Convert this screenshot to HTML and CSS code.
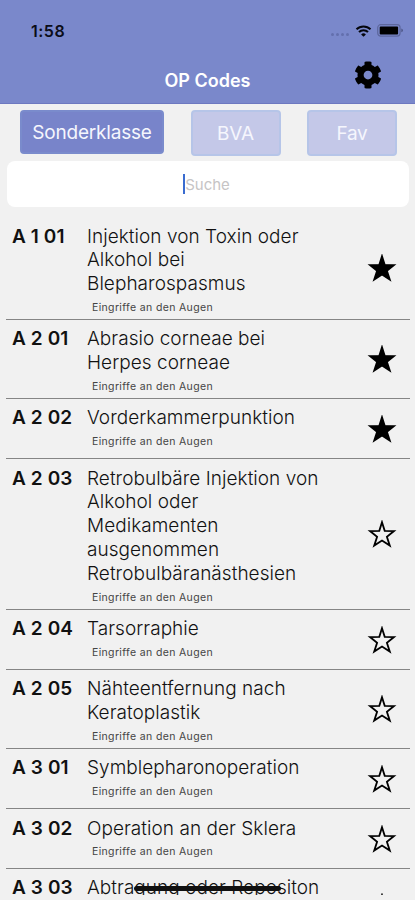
FILE: index.html
```html
<!DOCTYPE html>
<html lang="de">
<head>
    <meta charset="UTF-8">
    <meta name="viewport" content="width=device-width, initial-scale=1.0">
    <title>OP Codes</title>
    <link rel="stylesheet" href="styles.css">
</head>
<body>
    <svg class="symbols" width="0" height="0">
        <symbol id="star" viewBox="0 0 30 28">
            <path d="M15 2.2 L17.7 10.8 L27 11 L19.9 16.8 L22.8 25.6 L15 20.6 L7.2 25.6 L10.1 16.8 L3 11 L12.3 10.8 Z"/>
        </symbol>
    </svg>

    <header class="header">
        <div class="status-bar">
            <span class="time">1:58</span>
            <div class="status-icons">
                <span class="signal"><i></i><i></i><i></i><i></i></span>
                <svg class="wifi" viewBox="0 0 16 12">
                    <path d="M1 4.3 A10 10 0 0 1 15 4.3 M3.5 7 A6.4 6.4 0 0 1 12.5 7"/>
                    <path class="wifi-dot" d="M8 11.7 L5.6 9.5 A3.5 3.5 0 0 1 10.4 9.5 Z"/>
                </svg>
                <svg class="battery" viewBox="0 0 27 13">
                    <rect class="battery-frame" x="0.7" y="0.7" width="22.4" height="11.4" rx="3"/>
                    <rect x="2.7" y="2.4" width="18.4" height="8" rx="1"/>
                    <path class="battery-tip" d="M24.3 4.5 Q26 5.2 26 6.4 Q26 7.6 24.3 8.3 Z"/>
                </svg>
            </div>
        </div>
        <div class="title-bar">
            <h1>OP Codes</h1>
            <svg class="gear" viewBox="0 0 512 512">
                <path d="M487.4 315.7l-42.600-24.600c4.300-23.200 4.300-47 0-70.200l42.600-24.600c4.900-2.800 7.100-8.600 5.500-14-11.100-35.600-30-67.800-54.700-94.600-3.800-4.100-10-5.100-14.800-2.300L380.800 110c-17.900-15.400-38.500-27.300-60.800-35.100V25.800c0-5.600-3.900-10.500-9.400-11.700-36.700-8.200-74.300-7.800-109.200 0-5.500 1.200-9.400 6.100-9.400 11.700V75c-22.200 7.900-42.800 19.800-60.800 35.100L88.700 85.500c-4.900-2.800-11-1.900-14.800 2.300-24.700 26.700-43.600 58.900-54.700 94.600-1.700 5.400.6 11.200 5.500 14L67.300 221c-4.300 23.200-4.300 47 0 70.200l-42.600 24.600c-4.900 2.800-7.100 8.600-5.500 14 11.100 35.600 30 67.800 54.700 94.600 3.800 4.100 10 5.100 14.800 2.300l42.600-24.600c17.900 15.400 38.500 27.300 60.800 35.100v49.200c0 5.600 3.900 10.500 9.400 11.700 36.700 8.200 74.300 7.800 109.200 0 5.500-1.200 9.400-6.100 9.400-11.700v-49.200c22.200-7.900 42.800-19.800 60.800-35.100l42.600 24.600c4.900 2.800 11 1.900 14.800-2.300 24.700-26.700 43.600-58.900 54.700-94.600 1.500-5.500-.7-11.300-5.600-14.100zM256 336c-44.100 0-80-35.900-80-80s35.900-80 80-80 80 35.900 80 80-35.900 80-80 80z"/>
            </svg>
        </div>
    </header>

    <nav class="tabs">
        <button class="tab tab-wide active">Sonderklasse</button>
        <button class="tab">BVA</button>
        <button class="tab">Fav</button>
    </nav>

    <div class="search"><span class="caret"></span><span class="placeholder">Suche</span></div>

    <ul class="codes">
        <li>
            <span class="code">A 1 01</span>
            <div class="info"><p>Injektion von Toxin oder<br>Alkohol bei<br>Blepharospasmus</p><small>Eingriffe an den Augen</small></div>
            <svg class="star filled"><use href="#star"/></svg>
        </li>
        <li>
            <span class="code">A 2 01</span>
            <div class="info"><p>Abrasio corneae bei<br>Herpes corneae</p><small>Eingriffe an den Augen</small></div>
            <svg class="star filled"><use href="#star"/></svg>
        </li>
        <li>
            <span class="code">A 2 02</span>
            <div class="info"><p>Vorderkammerpunktion</p><small>Eingriffe an den Augen</small></div>
            <svg class="star filled"><use href="#star"/></svg>
        </li>
        <li>
            <span class="code">A 2 03</span>
            <div class="info"><p>Retrobulbäre Injektion von<br>Alkohol oder<br>Medikamenten<br>ausgenommen<br>Retrobulbäranästhesien</p><small>Eingriffe an den Augen</small></div>
            <svg class="star"><use href="#star"/></svg>
        </li>
        <li>
            <span class="code">A 2 04</span>
            <div class="info"><p>Tarsorraphie</p><small>Eingriffe an den Augen</small></div>
            <svg class="star"><use href="#star"/></svg>
        </li>
        <li>
            <span class="code">A 2 05</span>
            <div class="info"><p>Nähteentfernung nach<br>Keratoplastik</p><small>Eingriffe an den Augen</small></div>
            <svg class="star"><use href="#star"/></svg>
        </li>
        <li>
            <span class="code">A 3 01</span>
            <div class="info"><p>Symblepharonoperation</p><small>Eingriffe an den Augen</small></div>
            <svg class="star"><use href="#star"/></svg>
        </li>
        <li>
            <span class="code">A 3 02</span>
            <div class="info"><p>Operation an der Sklera</p><small>Eingriffe an den Augen</small></div>
            <svg class="star"><use href="#star"/></svg>
        </li>
        <li class="last">
            <span class="code">A 3 03</span>
            <div class="info"><p>Abtragung oder Repositon</p></div>
            <svg class="star"><use href="#star"/></svg>
        </li>
    </ul>

    <div class="home-indicator"></div>
</body>
</html>
```
FILE: styles.css
```css
* {
    box-sizing: border-box;
}
body {
    font-family: Inter, "Liberation Sans", sans-serif;
    margin: 0;
    height: 900px;
    overflow: hidden;
    background-color: #f1f1f1;
    color: #111;
    position: relative;
}
.symbols {
    display: block;
}

/* header */
.header {
    height: 104px;
    background-color: #7a88cb;
    border-bottom: 1px solid #6d78c0;
}
.status-bar {
    display: flex;
    justify-content: space-between;
    align-items: center;
    height: 61px;
    padding: 0 11px 0 31px;
}
.time {
    font-size: 16px;
    font-weight: 600;
    letter-spacing: 0.5px;
    color: #0b0d18;
}
.status-icons {
    display: flex;
    align-items: center;
}
.signal {
    display: flex;
    gap: 2px;
    margin: 8px 6px 0 0;
}
.signal i {
    width: 3px;
    height: 3px;
    border-radius: 50%;
    background-color: #6370ad;
}
.wifi {
    width: 17px;
    height: 12px;
    margin-right: 5px;
    fill: none;
    stroke: #05060c;
    stroke-width: 2;
}
.wifi .wifi-dot {
    fill: #05060c;
    stroke: none;
}
.battery {
    width: 27px;
    height: 13px;
}
.battery-frame {
    fill: none;
    stroke: #5d679d;
    stroke-width: 1.2;
}
.battery-tip {
    fill: #4e5788;
}
.title-bar {
    position: relative;
    height: 42px;
}
h1 {
    margin: 0;
    font-size: 18px;
    font-weight: 600;
    line-height: 39px;
    text-align: center;
    color: #fff;
}
.gear {
    position: absolute;
    left: 354px;
    top: 0;
    width: 28px;
    height: 28px;
}

/* tabs */
.tabs {
    display: flex;
    justify-content: space-between;
    padding: 6px 18px 0 20px;
    height: 57px;
}
.tab {
    width: 90px;
    height: 46px;
    padding: 0;
    border: 2px solid #b6c5e8;
    border-radius: 4px;
    background-color: #c4c8e8;
    color: #f5f6fd;
    font-family: inherit;
    font-size: 19px;
    letter-spacing: -0.2px;
}
.tab-wide {
    width: 144px;
    height: 44px;
}
.tab.active {
    background-color: #7884ca;
    border-color: #7a8bcc;
}

/* search */
.search {
    display: flex;
    justify-content: center;
    align-items: center;
    height: 46px;
    margin: 0 6px 0 7px;
    padding-right: 3px;
    border-radius: 8px;
    background-color: #fff;
    font-size: 15px;
    color: #c6c4c5;
}
.caret {
    width: 2px;
    height: 20px;
    background-color: #3a6cd0;
}

/* list */
.codes {
    list-style: none;
    height: 678px;
    overflow: hidden;
    margin: 10px 5px 0 6px;
    padding: 0;
}
.codes li {
    display: flex;
    min-height: 60.2px;
    padding: 7.5px 13px 2px 6px;
    border-bottom: 1px solid #858585;
}
.codes li.last {
    min-height: 76px;
    padding-top: 6.5px;
}
.code {
    width: 75px;
    font-size: 19px;
    font-weight: 600;
    line-height: 23.8px;
    letter-spacing: 0.1px;
    white-space: nowrap;
}
.info {
    flex: 1;
}
.info p {
    margin: 0;
    font-size: 19px;
    font-weight: 300;
    line-height: 23.8px;
    letter-spacing: 0.04px;
    white-space: nowrap;
}
.info small {
    display: block;
    margin: 2px 0 0 5px;
    font-size: 10.5px;
    line-height: 19px;
    letter-spacing: 0.35px;
    color: #444;
}
.star {
    align-self: center;
    width: 30px;
    height: 28px;
    margin-top: -5px;
    fill: none;
    stroke: #000;
    stroke-width: 1.8;
}
.star.filled {
    fill: #000;
}

.home-indicator {
    position: absolute;
    left: 134px;
    top: 886px;
    width: 147px;
    height: 5px;
    border-radius: 3px;
    background-color: #111;
}
```
